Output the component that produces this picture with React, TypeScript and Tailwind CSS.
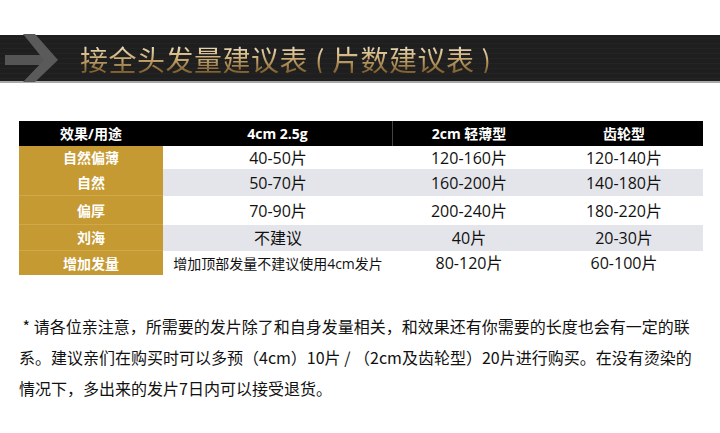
import React from "react";

const rows: { label: string; cells: string[]; h: string; gray: boolean }[] = [
  { label: "自然偏薄", cells: ["40-50片", "120-160片", "120-140片"], h: "h-[23px]", gray: false },
  { label: "自然", cells: ["50-70片", "160-200片", "140-180片"], h: "h-[27px]", gray: true },
  { label: "偏厚", cells: ["70-90片", "200-240片", "180-220片"], h: "h-[29px]", gray: false },
  { label: "刘海", cells: ["不建议", "40片", "20-30片"], h: "h-[26px]", gray: true },
  { label: "增加发量", cells: ["增加顶部发量不建议使用4cm发片", "80-120片", "60-100片"], h: "h-[23px]", gray: false },
];

export default function App() {
  return (
    <div
      className="w-[720px] h-[433px] bg-white overflow-hidden relative"
      style={{ fontFamily: '"Open Sans", "Noto Sans CJK SC", sans-serif' }}
    >
      {/* Banner */}
      <div className="mt-[35px] h-[48px] flex items-center bg-[#1f1f1f] bg-[repeating-linear-gradient(180deg,#1a1a1a_0px,#242424_1px,#181818_2px,#262626_3px,#1c1c1c_5px)] border-b-2 border-[#a9a9a9]">
        <svg width="62" height="48" viewBox="0 0 62 48" className="ml-[2px] shrink-0">
          <rect x="3" y="21" width="40" height="10" fill="#555555" />
          <polygon points="21,0 33,0 56,26 33,48 21,48 42,26" fill="#5a5a5a" />
        </svg>
        <div
          className="ml-[16px] text-[28px] leading-none tracking-[0.5px] bg-linear-to-b from-[#f2e8cf] via-[#cdae76] to-[#7a5b2a] bg-clip-text text-transparent pt-[2px]"
          style={{ fontFamily: '"Noto Sans CJK SC", sans-serif' }}
        >
          接全头发量建议表<span className="px-[7px]">(</span>片数建议表<span className="px-[7px]">)</span>
        </div>
      </div>

      {/* Table */}
      <div className="ml-[19px] mt-[38px] w-[684px]">
        <div className="grid grid-cols-[144px_230px_152px_158px] h-[25px] bg-black text-white font-bold text-[14px]">
          <div className="flex items-center justify-center">效果/用途</div>
          <div className="flex items-center justify-center border-r border-[#444]">4cm 2.5g</div>
          <div className="flex items-center justify-center">2cm 轻薄型</div>
          <div className="flex items-center justify-center">齿轮型</div>
        </div>
        {rows.map((r, i) => (
          <div
            key={i}
            className={`grid grid-cols-[144px_230px_152px_158px] ${r.h} text-[16px] text-[#111]`}
          >
            <div
              className={`flex items-center justify-center bg-[#c59a33] text-white font-bold text-[14px] ${
                i < rows.length - 1 ? "border-b border-[#cfa84a]" : ""
              }`}
            >
              {r.label}
            </div>
            {r.cells.map((c, j) => (
              <div
                key={j}
                className={`flex items-center justify-center whitespace-nowrap ${
                  r.gray ? "bg-[#e4e5ea]" : "bg-white"
                } ${j === 0 && i === 4 ? "text-[14px]" : ""}`}
              >
                {c}
              </div>
            ))}
          </div>
        ))}
      </div>

      {/* Note */}
      <div
        className="ml-[19px] mt-[37px] text-[16px] leading-[31px] text-[#111] whitespace-nowrap"
        style={{ fontFamily: '"Noto Sans CJK SC", sans-serif' }}
      >
        <div>&nbsp;* 请各位亲注意，所需要的发片除了和自身发量相关，和效果还有你需要的长度也会有一定的联</div>
        <div>系。建议亲们在购买时可以多预（4cm）10片 / （2cm及齿轮型）20片进行购买。在没有烫染的</div>
        <div>情况下，多出来的发片7日内可以接受退货。</div>
      </div>
    </div>
  );
}
